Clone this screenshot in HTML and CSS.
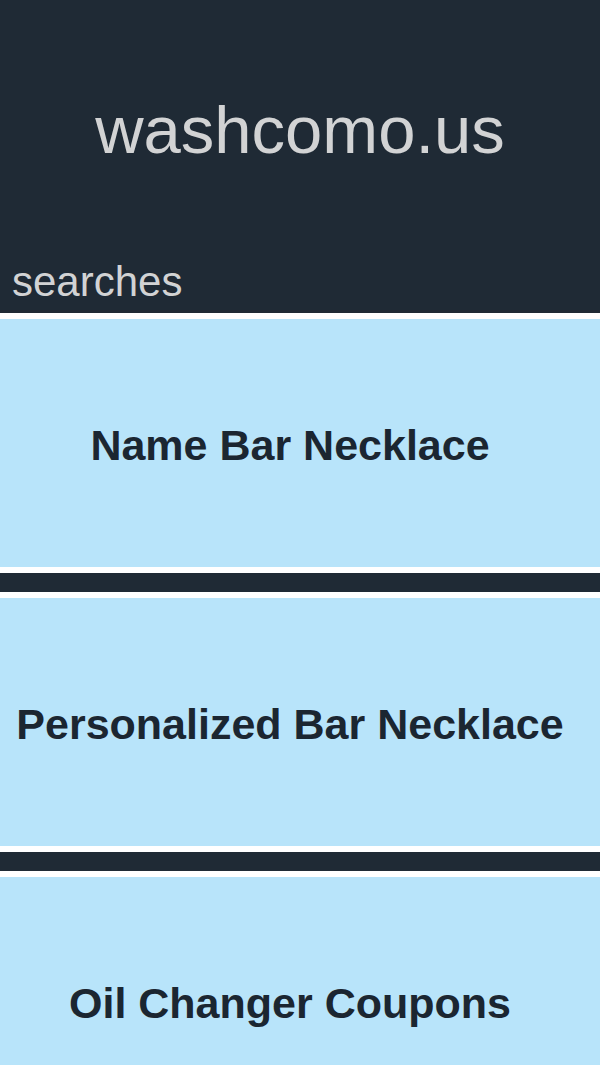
FILE: index.html
```html
<!DOCTYPE html>
<html lang="en">
<head>
<meta charset="utf-8">
<title>washcomo.us</title>
<link rel="stylesheet" href="styles.css">
</head>
<body>
<header class="header">
  <h1 class="site-title">washcomo.us</h1>
  <div class="section-label">searches</div>
</header>
<main class="list">
  <a class="card" href="#">Name Bar Necklace</a>
  <a class="card" href="#">Personalized Bar Necklace</a>
  <a class="card" href="#">Oil Changer Coupons</a>
</main>
</body>
</html>
```
FILE: styles.css
```css
html, body {
  margin: 0;
  padding: 0;
}
body {
  background: #1f2a35;
  font-family: "Liberation Sans", Arial, sans-serif;
  width: 600px;
  overflow: hidden;
}
.header {
  height: 313px;
  box-sizing: border-box;
  padding-top: 91px;
  display: flex;
  flex-direction: column;
}
.site-title {
  margin: 0;
  font-size: 67px;
  font-weight: normal;
  line-height: normal;
  color: #d2d3d4;
  text-align: center;
}
.section-label {
  margin-top: auto;
  margin-bottom: 7px;
  padding-left: 12px;
  font-size: 42px;
  line-height: normal;
  color: #d2d3d4;
}
.list {
  display: flex;
  flex-direction: column;
  gap: 19px;
}
.card {
  box-sizing: border-box;
  display: flex;
  align-items: center;
  justify-content: center;
  height: 260px;
  padding: 4px 20px 0 0;
  background: #b8e4fa;
  border-top: 6px solid #ffffff;
  border-bottom: 6px solid #ffffff;
  color: #1b2631;
  font-weight: bold;
  font-size: 43px;
  text-decoration: none;
  text-align: center;
}
```
